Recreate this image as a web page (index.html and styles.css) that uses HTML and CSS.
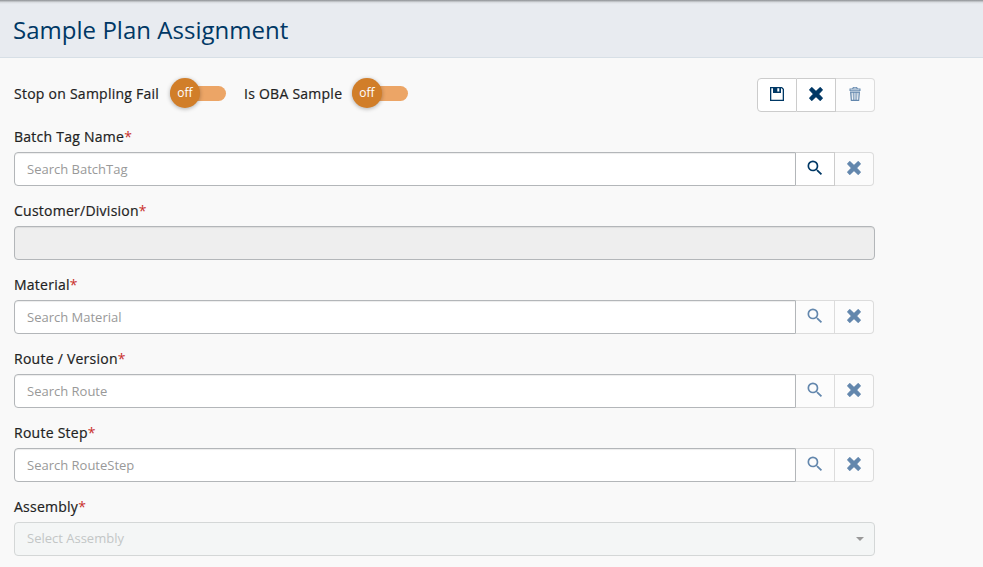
FILE: index.html
```html
<!DOCTYPE html>
<html lang="en">
<head>
<meta charset="utf-8">
<title>Sample Plan Assignment</title>
<link rel="stylesheet" href="styles.css">
</head>
<body>
<svg class="defs" aria-hidden="true">
  <symbol id="search" viewBox="0 0 24 24"><path d="M15.500 14h-.79l-.28-.27A6.471 6.471 0 0 0 16 9.500 6.500 6.500 0 1 0 9.500 16c1.610 0 3.090-.59 4.230-1.570l.27.28v.79l5 4.990L20.490 19l-4.990-5zm-6 0C7.010 14 5 11.990 5 9.500S7.010 5 9.500 5 14 7.010 14 9.500 11.990 14 9.500 14z"/></symbol>
  <symbol id="times" viewBox="0 0 14 14"><path d="M2.800 .7 7 4.700 11.200 .7 13.300 2.800 9.300 7 13.300 11.200 11.200 13.300 7 9.300 2.800 13.300 .7 11.200 4.700 7 .7 2.800z" stroke="currentColor" stroke-width="1.200" stroke-linejoin="round"/></symbol>
  <symbol id="save" viewBox="0 0 14 14"><path fill-rule="evenodd" d="M0 0H12L14 2V14H0zM1.300 1.300V12.700H12.700V2.500L11.500 1.300H11V6H3V1.300zM7.300 1.300V4.500H9.300V1.300z"/></symbol>
  <symbol id="trash" viewBox="0 0 12 14"><path fill-rule="evenodd" d="M4 0H8L8.800 1.500H11.500V4H.5V1.500H3.200zM4.700 .8 4.300 1.500H7.700L7.300 .8zM1.500 2.400V3.200H10.500V2.400zM1 4.600H11L10.200 14H1.800zM2.500 5.700 2.900 12.700H4L3.700 5.700zM4.700 5.700V12.700H5.600V5.700zM6.500 5.700V12.700H7.400V5.700zM8.400 5.700 8.100 12.700H9.200L9.600 5.700z"/></symbol>
</svg>
<header class="page-header"><h1>Sample Plan Assignment</h1></header>
<main class="form">
  <div class="toolbar">
    <span class="label first">Stop on Sampling Fail</span>
    <button class="switch"><span class="knob">off</span></button>
    <span class="label second">Is OBA Sample</span>
    <button class="switch"><span class="knob">off</span></button>
    <div class="actions">
      <button class="btn"><svg class="i-save"><use href="#save"/></svg></button>
      <button class="btn"><svg class="i-times"><use href="#times"/></svg></button>
      <button class="btn" disabled><svg class="i-trash"><use href="#trash"/></svg></button>
    </div>
  </div>
  <div class="field">
    <label class="label">Batch Tag Name<b>*</b></label>
    <div class="group"><input type="text" placeholder="Search BatchTag"><button class="btn"><svg class="i-search"><use href="#search"/></svg></button><button class="btn" disabled><svg class="i-times"><use href="#times"/></svg></button></div>
  </div>
  <div class="field">
    <label class="label">Customer/Division<b>*</b></label>
    <div class="readonly"></div>
  </div>
  <div class="field">
    <label class="label">Material<b>*</b></label>
    <div class="group"><input type="text" placeholder="Search Material"><button class="btn" disabled><svg class="i-search"><use href="#search"/></svg></button><button class="btn" disabled><svg class="i-times"><use href="#times"/></svg></button></div>
  </div>
  <div class="field">
    <label class="label">Route / Version<b>*</b></label>
    <div class="group"><input type="text" placeholder="Search Route"><button class="btn" disabled><svg class="i-search"><use href="#search"/></svg></button><button class="btn" disabled><svg class="i-times"><use href="#times"/></svg></button></div>
  </div>
  <div class="field">
    <label class="label">Route Step<b>*</b></label>
    <div class="group"><input type="text" placeholder="Search RouteStep"><button class="btn" disabled><svg class="i-search"><use href="#search"/></svg></button><button class="btn" disabled><svg class="i-times"><use href="#times"/></svg></button></div>
  </div>
  <div class="field">
    <label class="label">Assembly<b>*</b></label>
    <div class="select"><span>Select Assembly</span><i class="caret"></i></div>
  </div>
</main>
</body>
</html>
```
FILE: styles.css
```css
* { box-sizing: border-box; }
body {
  margin: 0;
  height: 567px;
  overflow: hidden;
  background: #f9f9f9;
  color: #222;
  font: 13px/20px "Open Sans", sans-serif;
}
.defs { display: none; }
.page-header {
  height: 58px;
  padding: 13px 13px 0;
  background: linear-gradient(#929599 0, #a7aaae 1px, #d5d8dc 2px, #e8ebf0 4px);
  border-bottom: 1px solid #d7dfe6;
}
h1 {
  margin: 0;
  font-size: 24px;
  line-height: 34px;
  font-weight: 400;
  letter-spacing: .03px;
  color: #003865;
}
.form { width: 875px; padding: 20px 0 0 14px; }
.toolbar { display: flex; align-items: center; height: 34px; margin-bottom: 14px; }
.label {
  font-size: 14px;
  line-height: 20px;
  font-weight: 400;
  letter-spacing: .25px;
  -webkit-text-stroke: .2px currentColor;
  white-space: nowrap;
}
.label b { color: #c9302c; font-weight: 400; -webkit-text-stroke: 0; }
.first { width: 156px; }
.second { width: 108px; margin-left: 18px; }
.toolbar .label { margin-top: -2px; }
.switch {
  display: flex;
  align-items: center;
  width: 56px;
  height: 15px;
  margin: -3px 0 0;
  padding: 0;
  border: 0;
  border-radius: 8px;
  background: #eca566;
}
.knob {
  flex: none;
  width: 30px;
  height: 30px;
  margin-top: -1px;
  border-radius: 50%;
  background: #d17e29;
  color: #fff;
  font: 12px/30px "Open Sans", sans-serif;
  text-align: center;
  box-shadow: 0 1px 4px rgba(0, 0, 0, .3);
}
.actions { display: flex; margin-left: auto; }
.btn {
  display: flex;
  align-items: center;
  justify-content: center;
  flex: none;
  width: 39px;
  height: 34px;
  padding: 0;
  border: 1px solid #ccc;
  border-left: 0;
  background: #fff;
  color: #003865;
}
.btn:disabled { background: #fcfcfc; border-color: #dcdcdc; color: #6387ad; }
.btn:last-child { border-radius: 0 4px 4px 0; }
.actions .btn:first-child { width: 40px; border-left: 1px solid #ccc; border-radius: 4px 0 0 4px; }
.btn svg { display: block; fill: currentColor; }
.i-save { width: 14px; height: 14px; margin-top: -3px; }
.i-times { width: 14px; height: 14px; margin-top: -2px; }
.i-trash { width: 12px; height: 14px; margin-top: -2px; }
.i-search { width: 20px; height: 20px; margin-top: -2px; }
.field { height: 74px; }
.field .label { display: block; height: 26px; padding-top: 1px; }
.group { display: flex; width: 860px; }
input {
  flex: 1;
  min-width: 0;
  height: 34px;
  padding: 0 12px;
  border: 1px solid #b3b6b9;
  border-radius: 4px 0 0 4px;
  background: #fff;
  box-shadow: inset 0 1px 1px rgba(0, 0, 0, .075);
  font: 13px "Open Sans", sans-serif;
}
input::placeholder { color: #999; opacity: 1; }
.readonly, .select { height: 34px; border: 1px solid #b3b6b9; border-radius: 4px; }
.readonly { background: #eee; box-shadow: inset 0 1px 1px rgba(0, 0, 0, .075); }
.select {
  display: flex;
  align-items: center;
  justify-content: space-between;
  padding: 0 10px 2px 12px;
  border-color: #d4d7d7;
  background: #f4f6f6;
  color: #c3c6c6;
}
.caret { border: 4px solid transparent; border-top-color: #999; border-bottom: 0; margin-top: 2px; }
```
